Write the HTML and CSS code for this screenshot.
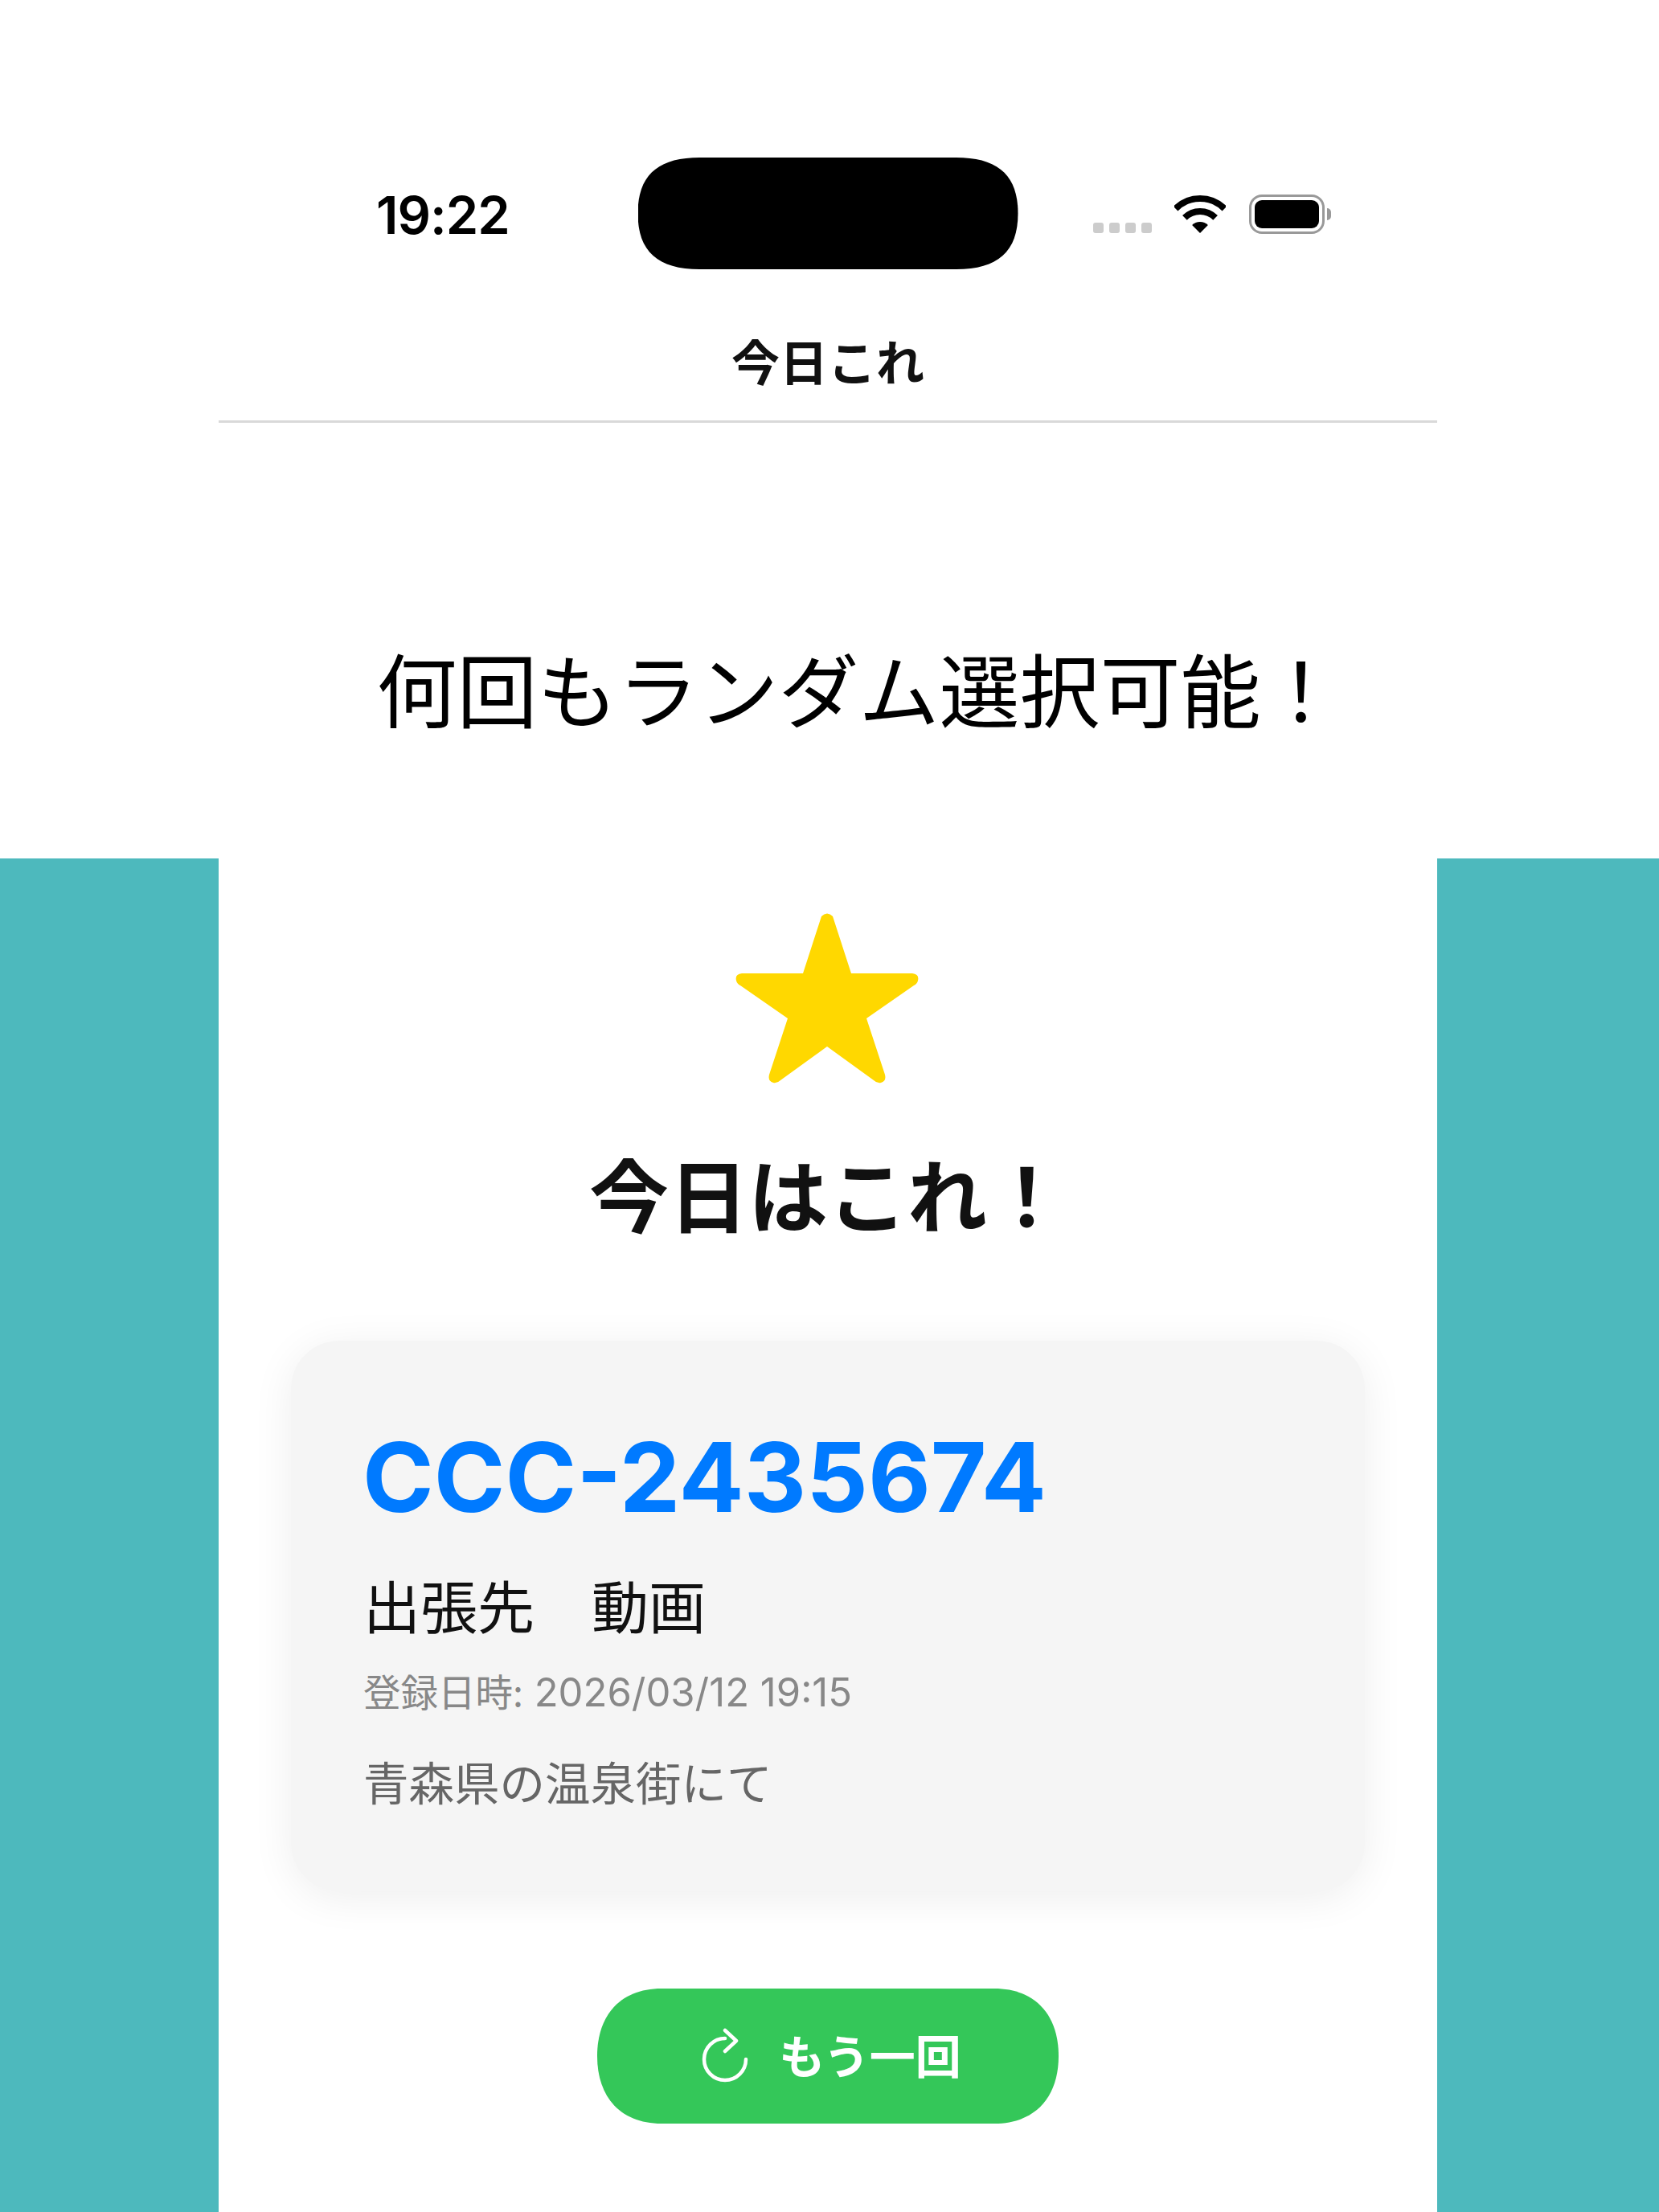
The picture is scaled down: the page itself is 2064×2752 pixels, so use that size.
FILE: index.html
```html
<!DOCTYPE html>
<html lang="ja">
<head>
<meta charset="utf-8">
<title>今日これ</title>
<link rel="stylesheet" href="styles.css">
</head>
<body>
<div class="page">
  <header class="top">
    <div class="status">
      <div class="time">19:22</div>
      <div class="island"></div>
      <div class="indicators">
        <div class="signal"><span class="dot"></span><span class="dot"></span><span class="dot"></span><span class="dot"></span></div>
        <svg class="wifi" width="64" height="48" viewBox="0 0 64 48"><path d="M1.6 16.6A43 43 0 0 1 62.4 16.6" fill="none" stroke="#000" stroke-width="8"/><path d="M12.9 27.9A27 27 0 0 1 51.1 27.9" fill="none" stroke="#000" stroke-width="8"/><path d="M32 47L22.1 37.1A14 14 0 0 1 41.9 37.1Z" fill="#000"/></svg>
        <div class="battery"><div class="battery-fill"></div></div>
        <div class="battery-nub"></div>
      </div>
    </div>
    <div class="nav">今日これ</div>
    <h1 class="headline">何回もランダム選択可能！</h1>
  </header>
  <main class="stage">
    <section class="phone">
      <svg class="star" width="228" height="213" viewBox="0 0 228 213"><path d="M107 5Q114 -2 121 5L144 76L220 76Q229 77 227 85Q226 89 222 91L163 132L186 202Q188 210 181 212Q176 213 172 209L114 167L56 209Q52 213 47 212Q40 210 42 202L65 132L6 91Q2 89 1 85Q-1 77 8 76L84 76Z" fill="#ffd800"/></svg>
      <h2 class="result-title">今日はこれ！</h2>
      <article class="card">
        <div class="code">CCC-2435674</div>
        <div class="category">出張先　動画</div>
        <div class="date"><span class="date-label">登録日時:</span> 2026/03/12 19:15</div>
        <div class="note">青森県の温泉街にて</div>
      </article>
      <button class="again" type="button">
        <svg class="again-icon" width="60" height="70" viewBox="0 0 60 70"><path d="M57 39A26 26 0 1 1 31 13M31 3L45 16L31 29" fill="none" stroke="#fff" stroke-width="4.5" stroke-linecap="round" stroke-linejoin="round"/></svg>
        <span class="again-label">もう一回</span>
      </button>
    </section>
  </main>
</div>
</body>
</html>
```
FILE: styles.css
```css
* { box-sizing: border-box; }
html, body { margin: 0; padding: 0; }
body {
  background: #fff;
  font-family: Inter, "Noto Sans CJK JP", sans-serif;
  color: #111;
}
.page {
  width: 2064px;
  height: 2752px;
  overflow: hidden;
  display: flex;
  flex-direction: column;
}
.top {
  height: 1068px;
  padding-right: 4px;
  display: flex;
  flex-direction: column;
  align-items: center;
  flex: none;
}
.status {
  width: 1516px;
  margin-top: 196px;
  height: 139px;
  display: grid;
  grid-template-columns: 1fr 473px 1fr;
}
.time {
  padding-left: 196px;
  padding-top: 32px;
  font-size: 65px;
  letter-spacing: -1px;
  line-height: 80px;
  font-weight: 600;
  color: #000;
}
.island {
  background: #000;
  clip-path: path("M77 0H396C448 0 473 22 473 69.5C473 117 448 139 396 139H77C25 139 0 117 0 69.5C0 22 25 0 77 0Z");
}
.indicators {
  display: flex;
  align-items: flex-start;
  padding-left: 93px;
  padding-top: 46px;
}
.signal {
  display: flex;
  gap: 7px;
  margin-top: 35px;
}
.dot {
  width: 13px;
  height: 13px;
  border-radius: 3px;
  background: #ccc;
}
.wifi { margin-left: 28px; margin-top: 1px; }
.battery {
  margin-left: 29px;
  width: 94px;
  height: 49px;
  border: 3px solid #999;
  border-radius: 16px;
  padding: 4px;
}
.battery-fill {
  width: 100%;
  height: 100%;
  background: #000;
  border-radius: 9px;
}
.battery-nub {
  width: 5px;
  height: 15px;
  margin-left: 3px;
  margin-top: 17px;
  background: #999;
  border-radius: 0 8px 8px 0;
}
.nav {
  width: 1516px;
  height: 191px;
  padding-top: 78px;
  border-bottom: 3px solid #d9d9d9;
  text-align: center;
  font-family: "Noto Sans CJK JP", sans-serif;
  font-size: 60px;
  line-height: 70px;
  font-weight: 700;
  color: #111;
}
.headline {
  margin: 279px 0 0 77px;
  font-family: "Noto Sans CJK JP", sans-serif;
  font-size: 100px;
  line-height: 100px;
  font-weight: 400;
  color: #000;
  white-space: nowrap;
}
.stage {
  flex: 1;
  padding-right: 4px;
  background: #4db9bd;
  display: flex;
  justify-content: center;
}
.phone {
  width: 1516px;
  background: #fff;
  display: flex;
  flex-direction: column;
  align-items: center;
  padding-top: 67px;
}
.star { display: block; flex: none; margin-right: 3px; }
.result-title {
  margin: 85px 0 0;
  font-family: "Noto Sans CJK JP", sans-serif;
  font-size: 99px;
  line-height: 100px;
  font-weight: 700;
  color: #111;
}
.card {
  margin-top: 135px;
  width: 1336px;
  height: 685px;
  padding: 100px 90px 0;
  background: #f5f5f5;
  border-radius: 60px;
  box-shadow: 0 8px 52px rgba(0, 0, 0, 0.07);
  flex: none;
}
.code {
  margin-left: -1px;
  font-size: 120px;
  line-height: 140px;
  font-weight: 700;
  color: #007aff;
}
.category {
  margin-top: 52px;
  font-family: "Noto Sans CJK JP", sans-serif;
  font-size: 71px;
  line-height: 70px;
  color: #111;
}
.date {
  margin-top: 43px;
  font-size: 49px;
  line-height: 60px;
  color: #888;
}
.date-label {
  font-family: "Noto Sans CJK JP", sans-serif;
  font-size: 46.5px;
}
.note {
  margin-top: 44px;
  font-family: "Noto Sans CJK JP", sans-serif;
  font-size: 56.5px;
  line-height: 70px;
  color: #666;
}
.again {
  margin-top: 121px;
  width: 574px;
  height: 168px;
  flex: none;
  border: 0;
  background: #34c759;
  color: #fff;
  display: flex;
  align-items: center;
  justify-content: center;
  padding: 0 0 0 7px;
  gap: 38px;
  clip-path: path("M80 0H494C544 0 574 32 574 84C574 136 544 168 494 168H80C30 168 0 136 0 84C0 32 30 0 80 0Z");
}
.again-icon { display: block; }
.again-label {
  position: relative;
  top: -3px;
  font-family: "Noto Sans CJK JP", sans-serif;
  font-size: 57px;
  line-height: 70px;
  font-weight: 700;
}
```
